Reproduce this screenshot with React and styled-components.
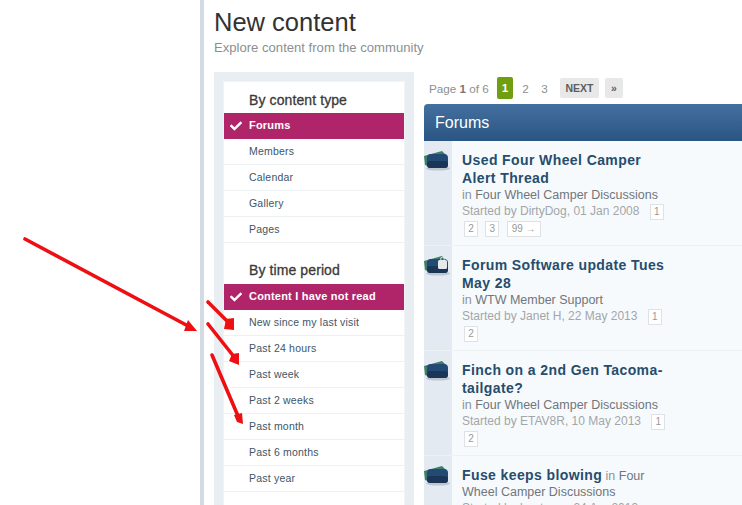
import React from "react";
import styled, { createGlobalStyle } from "styled-components";
import { FaCheck } from "react-icons/fa";

const GlobalStyle = createGlobalStyle`
  html, body {
    margin: 0;
    padding: 0;
    background: #fff;
    height: 505px;
    overflow: hidden;
  }
  body {
    font-family: "Liberation Sans", Arial, sans-serif;
  }
`;

const contentTypes = ["Forums", "Members", "Calendar", "Gallery", "Pages"];
const timePeriods = [
  "Content I have not read",
  "New since my last visit",
  "Past 24 hours",
  "Past week",
  "Past 2 weeks",
  "Past month",
  "Past 6 months",
  "Past year",
];

const topics = [
  {
    title: "Used Four Wheel Camper Alert Thread",
    forum: "Four Wheel Camper Discussions",
    started: "Started by DirtyDog, 01 Jan 2008",
    pages: ["1", "2", "3", "99 →"],
  },
  {
    title: "Forum Software update Tues May 28",
    forum: "WTW Member Support",
    started: "Started by Janet H, 22 May 2013",
    pages: ["1", "2"],
    pinned: true,
  },
  {
    title: "Finch on a 2nd Gen Tacoma-tailgate?",
    forum: "Four Wheel Camper Discussions",
    started: "Started by ETAV8R, 10 May 2013",
    pages: ["1", "2"],
  },
  {
    title: "Fuse keeps blowing",
    forum: "Four Wheel Camper Discussions",
    started: "Started by boatman, 24 Apr 2013",
    pages: [],
    inline: true,
  },
];

const arrows = [
  { line: "M25 239 L190 327", head: "188,320 197,331 184,331" },
  { line: "M208 302 L229 323", head: "226,319 234,318 234,330 224,329" },
  { line: "M208 324 L235 358", head: "232,354 239,353 239,365 229,361" },
  { line: "M212 355 L238 416", head: "234,415 242,413 243,424 237,422" },
];

const FolderIcon = ({ pinned }) => (
  <svg width="26" height="22" viewBox="0 0 26 22">
    <ellipse cx="14" cy="18.5" rx="12" ry="2" fill="#bfc6ce" />
    <path d="M0 6 L18 1 L22 5 L6 17 L1 15 Z" fill="#3d7f66" />
    <rect x="3" y="4" width="21" height="14" rx="4" fill="#234a72" />
    <rect x="3" y="11" width="21" height="7" rx="3" fill="#1b3558" />
    {pinned && (
      <g>
        <rect x="14" y="5" width="9" height="9" rx="1.5" fill="#e6e9ec" />
        <circle cx="18.5" cy="4" r="1.8" fill="none" stroke="#e6e9ec" />
      </g>
    )}
  </svg>
);

const App = () => {
  return (
    <Page>
      <GlobalStyle />
      <Gutter />
      <Main>
        <PageTitle>New content</PageTitle>
        <PageSub>Explore content from the community</PageSub>
        <Columns>
          <SidePanel>
            <SideInner>
              <SideHeading>By content type</SideHeading>
              {contentTypes.map((item, i) => (
                <SideItem key={item} $active={i === 0}>
                  {i === 0 && <FaCheck size={12} />}
                  {item}
                </SideItem>
              ))}
              <SideHeading $second>By time period</SideHeading>
              {timePeriods.map((item, i) => (
                <SideItem key={item} $active={i === 0}>
                  {i === 0 && <FaCheck size={12} />}
                  {item}
                </SideItem>
              ))}
            </SideInner>
          </SidePanel>
          <Content>
            <Pagination>
              <PageCount>
                Page <b>1</b> of 6
              </PageCount>
              <CurrentPage>1</CurrentPage>
              <PageLink>2</PageLink>
              <PageLink>3</PageLink>
              <PageButton>NEXT</PageButton>
              <PageButton $small>»</PageButton>
            </Pagination>
            <ForumHeader>Forums</ForumHeader>
            {topics.map((topic) => (
              <TopicRow key={topic.title}>
                <IconCell>
                  <FolderIcon pinned={topic.pinned} />
                </IconCell>
                <TopicBody>
                  <TopicTitle>{topic.title}</TopicTitle>
                  {topic.inline ? " " : <br />}
                  <TopicMeta>
                    in <ForumName>{topic.forum}</ForumName>
                  </TopicMeta>
                  <br />
                  <TopicStarted>{topic.started}</TopicStarted>{" "}
                  {topic.pages.map((p) => (
                    <React.Fragment key={p}>
                      <MiniPage $wide={p.length > 1}>{p}</MiniPage>{" "}
                    </React.Fragment>
                  ))}
                </TopicBody>
              </TopicRow>
            ))}
          </Content>
        </Columns>
      </Main>
      <ArrowLayer width="742" height="505" viewBox="0 0 742 505">
        {arrows.map((a) => (
          <g key={a.line}>
            <path d={a.line} stroke="#ee0f12" strokeWidth="3.6" strokeLinecap="round" fill="none" />
            <polygon points={a.head} fill="#ee0f12" />
          </g>
        ))}
      </ArrowLayer>
    </Page>
  );
};

const Page = styled.div`
  position: relative;
  display: flex;
  width: 742px;
  height: 505px;
  overflow: hidden;
`;

const Gutter = styled.div`
  width: 200px;
  flex: none;
  border-right: 4px solid #d3dae3;
`;

const Main = styled.div`
  flex: 1;
  min-width: 0;
  padding: 7px 0 0 10px;
`;

const PageTitle = styled.h1`
  margin: 0;
  font-size: 25.5px;
  line-height: 30px;
  font-weight: 400;
  color: #323232;
`;

const PageSub = styled.p`
  margin: 2px 0 0;
  font-size: 13.1px;
  line-height: 17px;
  color: #8a8f94;
`;

const Columns = styled.div`
  display: flex;
  margin-top: 16px;
  gap: 10px;
`;

const SidePanel = styled.div`
  width: 180px;
  flex: none;
  padding: 10px 10px 0;
  background: #e9eef2;
`;

const SideInner = styled.div`
  background: #fff;
  height: 470px;
  box-shadow: 0 0 0 1px #f1f4f6;
`;

const SideHeading = styled.h4`
  margin: 0;
  padding: ${(p) => (p.$second ? "19px" : "10px")} 0 0 25px;
  height: ${(p) => (p.$second ? "22px" : "21px")};
  font-size: 14px;
  line-height: 17px;
  font-weight: 400;
  letter-spacing: 0.1px;
  -webkit-text-stroke: 0.3px #3a3a3a;
  color: #3a3a3a;
`;

const SideItem = styled.div`
  position: relative;
  height: 25px;
  line-height: 25px;
  padding-left: 25px;
  font-size: ${(p) => (p.$active ? "11px" : "10.5px")};
  letter-spacing: 0.2px;
  font-weight: ${(p) => (p.$active ? 700 : 400)};
  color: ${(p) => (p.$active ? "#fff" : "#3e5566")};
  background: ${(p) => (p.$active ? "#b0256a" : "#fff")};
  border-bottom: 1px solid ${(p) => (p.$active ? "#b0256a" : "#eef1f3")};

  svg {
    position: absolute;
    left: 6px;
    top: 7px;
  }
`;

const Content = styled.div`
  flex: 1;
  min-width: 0;
`;

const Pagination = styled.div`
  display: flex;
  align-items: center;
  height: 22px;
  margin-top: 5px;
  padding-left: 5px;
  font-size: 11.7px;
  color: #8a8f94;
`;

const PageCount = styled.span`
  width: 68px;
  flex: none;
  b {
    color: #777;
  }
`;

const CurrentPage = styled.span`
  width: 16px;
  height: 22px;
  line-height: 22px;
  margin-right: 3px;
  text-align: center;
  border-radius: 2px;
  background: #6f9e10;
  color: #fff;
  font-weight: 700;
`;

const PageLink = styled.span`
  width: 19px;
  text-align: center;
  color: #8a8f94;
`;

const PageButton = styled.span`
  height: 20px;
  line-height: 20px;
  width: ${(p) => (p.$small ? "18px" : "39px")};
  margin-left: 6px;
  text-align: center;
  border-radius: 2px;
  background: #e8e8e8;
  color: #5d5d5d;
  font-size: 10.5px;
  font-weight: 700;
`;

const ForumHeader = styled.div`
  height: 37px;
  line-height: 37px;
  margin-top: 5px;
  padding-left: 11px;
  border-radius: 4px 0 0 0;
  background: linear-gradient(#44709f, #2a5583);
  color: #fff;
  font-size: 16px;
`;

const TopicRow = styled.div`
  display: flex;
  height: 104px;
  border-bottom: 1px solid #eef1f4;
  background: #f7fafc;
`;

const IconCell = styled.div`
  position: relative;
  width: 28px;
  flex: none;
  background: #e4eaf2;

  svg {
    position: absolute;
    left: 0;
    top: 9px;
    filter: blur(0.3px);
  }
`;

const TopicBody = styled.div`
  width: 208px;
  padding: 10px 0 0 10px;
  font-size: 12px;
  line-height: 16px;
`;

const TopicTitle = styled.a`
  color: #264d6d;
  font-size: 14px;
  line-height: 18px;
  font-weight: 700;
  letter-spacing: 0.4px;
`;

const TopicMeta = styled.span`
  color: #8d9296;
  font-size: 12.5px;
`;

const ForumName = styled.span`
  color: #70767b;
`;

const TopicStarted = styled.span`
  color: #a2a6a9;
  margin-right: 5px;
`;

const MiniPage = styled.span`
  display: inline-block;
  min-width: 10px;
  height: 14px;
  line-height: 14px;
  margin: 0 2px;
  padding: 0 ${(p) => (p.$wide ? "4px" : "1px")};
  text-align: center;
  border: 1px solid #dfe2e4;
  background: #fff;
  color: #999;
  font-size: 10px;
`;

const ArrowLayer = styled.svg`
  position: absolute;
  top: 0;
  left: 0;
  pointer-events: none;
`;

export default App;
